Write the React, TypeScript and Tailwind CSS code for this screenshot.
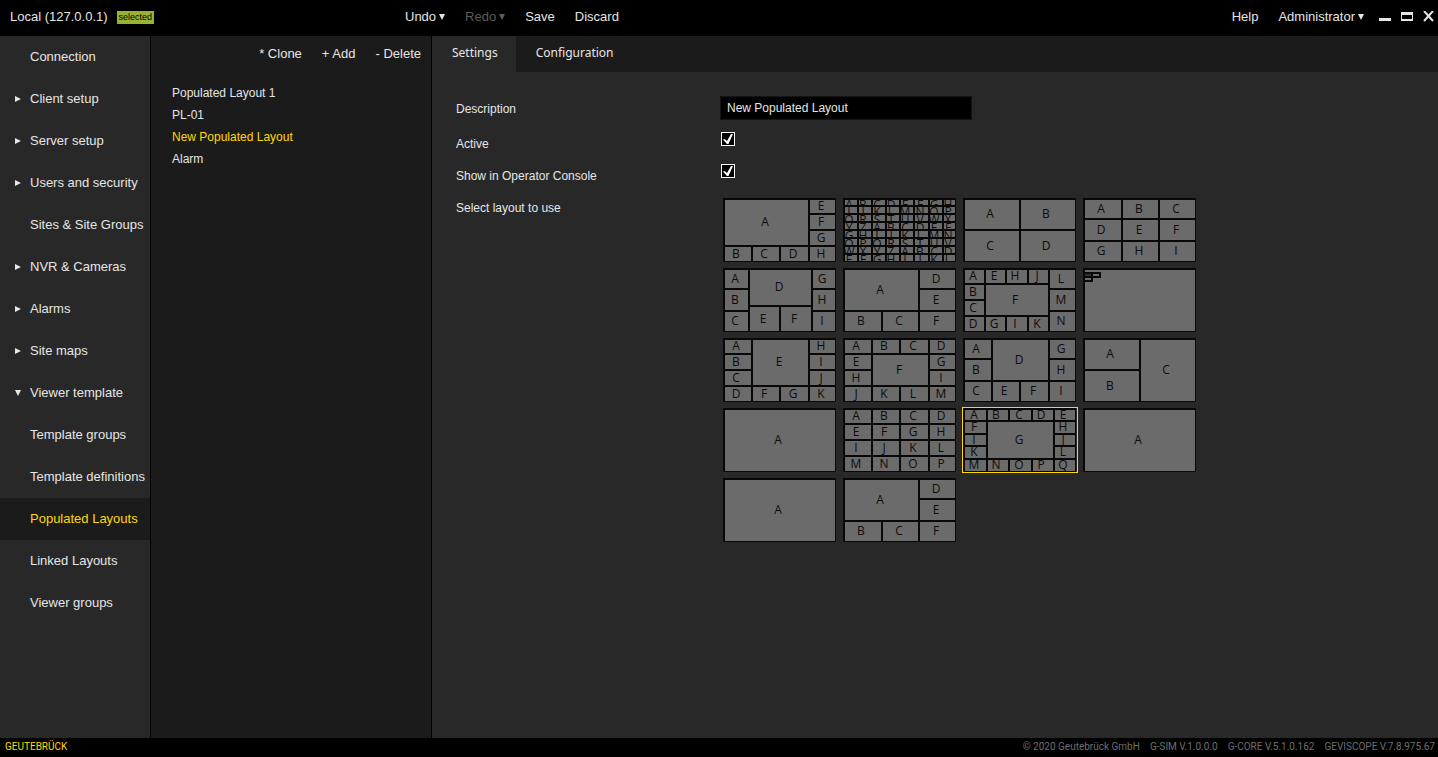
import { useState } from "react";
import type { ReactNode } from "react";

type Cell = [string, number, number, number, number];

interface Layout {
  cells: Cell[];
  fragments?: boolean;
}

const ALPHABET = "ABCDEFGHIJKLMNOPQRSTUVWXYZ";

function evenGrid(xs: number[], ys: number[]): Cell[] {
  const cells: Cell[] = [];
  for (let r = 0; r < ys.length - 1; r++) {
    for (let c = 0; c < xs.length - 1; c++) {
      cells.push([ALPHABET[cells.length % 26], xs[c], ys[r], xs[c + 1], ys[r + 1]]);
    }
  }
  return cells;
}

const W = 112;
const H = 63;

const single: Layout = { cells: [["A", 0, 0, W, H]] };

const sixPane: Layout = {
  cells: [
    ["A", 0, 0, 75, 42], ["B", 0, 42, 38, H], ["C", 38, 42, 75, H],
    ["D", 75, 0, W, 20], ["E", 75, 20, W, 42], ["F", 75, 42, W, H],
  ],
};

const layouts: Layout[] = [
  {
    cells: [
      ["A", 0, 0, 85, 47], ["B", 0, 47, 28, H], ["C", 28, 47, 56, H], ["D", 56, 47, 85, H],
      ["E", 85, 0, W, 15], ["F", 85, 15, W, 31], ["G", 85, 31, W, 47], ["H", 85, 47, W, H],
    ],
  },
  { cells: evenGrid([0, 14, 28, 42, 56, 70, 85, 99, W], [0, 7, 15, 23, 31, 39, 47, 55, H]) },
  { cells: evenGrid([0, 56, W], [0, 31, H]) },
  { cells: evenGrid([0, 38, 75, W], [0, 20, 42, H]) },
  {
    cells: [
      ["A", 0, 0, 25, 20], ["B", 0, 20, 25, 42], ["C", 0, 42, 25, H],
      ["D", 25, 0, 88, 37], ["E", 25, 37, 56, H], ["F", 56, 37, 88, H],
      ["G", 88, 0, W, 20], ["H", 88, 20, W, 42], ["I", 88, 42, W, H],
    ],
  },
  sixPane,
  {
    cells: [
      ["A", 0, 0, 21, 15], ["B", 0, 15, 21, 31], ["C", 0, 31, 21, 47], ["D", 0, 47, 21, H],
      ["E", 21, 0, 42, 15], ["F", 21, 15, 85, 47], ["G", 21, 47, 42, H],
      ["H", 42, 0, 64, 15], ["I", 42, 47, 64, H],
      ["J", 64, 0, 85, 15], ["K", 64, 47, 85, H],
      ["L", 85, 0, W, 20], ["M", 85, 20, W, 42], ["N", 85, 42, W, H],
    ],
  },
  { cells: [["", 0, 0, W, H]], fragments: true },
  {
    cells: [
      ["A", 0, 0, 28, 15], ["B", 0, 15, 28, 31], ["C", 0, 31, 28, 47], ["D", 0, 47, 28, H],
      ["E", 28, 0, 85, 47], ["F", 28, 47, 56, H], ["G", 56, 47, 85, H],
      ["H", 85, 0, W, 15], ["I", 85, 15, W, 31], ["J", 85, 31, W, 47], ["K", 85, 47, W, H],
    ],
  },
  {
    cells: [
      ["A", 0, 0, 28, 15], ["B", 28, 0, 56, 15], ["C", 56, 0, 85, 15], ["D", 85, 0, W, 15],
      ["E", 0, 15, 28, 31], ["F", 28, 15, 85, 47], ["G", 85, 15, W, 31],
      ["H", 0, 31, 28, 47], ["I", 85, 31, W, 47],
      ["J", 0, 47, 28, H], ["K", 28, 47, 56, H], ["L", 56, 47, 85, H], ["M", 85, 47, W, H],
    ],
  },
  {
    cells: [
      ["A", 0, 0, 28, 20], ["B", 0, 20, 28, 42], ["C", 0, 42, 28, H],
      ["D", 28, 0, 85, 42], ["E", 28, 42, 56, H], ["F", 56, 42, 85, H],
      ["G", 85, 0, W, 20], ["H", 85, 20, W, 42], ["I", 85, 42, W, H],
    ],
  },
  { cells: [["A", 0, 0, 56, 31], ["B", 0, 31, 56, H], ["C", 56, 0, W, H]] },
  single,
  { cells: evenGrid([0, 28, 56, 85, W], [0, 15, 31, 47, H]) },
  {
    cells: [
      ["A", 0, 0, 23, 12], ["B", 23, 0, 45, 12], ["C", 45, 0, 68, 12], ["D", 68, 0, 90, 12], ["E", 90, 0, W, 12],
      ["F", 0, 12, 23, 25], ["G", 23, 12, 90, 50], ["H", 90, 12, W, 25],
      ["I", 0, 25, 23, 37], ["J", 90, 25, W, 37],
      ["K", 0, 37, 23, 50], ["L", 90, 37, W, 50],
      ["M", 0, 50, 23, H], ["N", 23, 50, 45, H], ["O", 45, 50, 68, H], ["P", 68, 50, 90, H], ["Q", 90, 50, W, H],
    ],
  },
  single,
  single,
  sixPane,
];

function LayoutDrawing({ layout }: { layout: Layout }) {
  return (
    <svg width="113" height="64" viewBox="0 0 113 64" className="block" shapeRendering="crispEdges">
      <rect width="113" height="64" fill="#080808" />
      {layout.cells.map(([letter, x0, y0, x1, y1], i) => {
        const left = x0 + 2;
        const top = y0 + 2;
        const baseline = Math.max(Math.floor((y0 + y1) / 2) + 5, y0 + 11);
        return (
          <svg key={i} x={left} y={top} width={x1 - left} height={y1 - top} overflow="hidden">
            <rect width="100%" height="100%" fill="#6b6b6b" />
            <text
              x={Math.floor((x0 + x1 - 1) / 2) - left}
              y={baseline - top}
              textAnchor="middle"
              fill="#0c0c0c"
              className="font-['Open_Sans',sans-serif] text-[12px]"
            >
              {letter}
            </text>
          </svg>
        );
      })}
      {layout.fragments && (
        <g fill="none" stroke="#080808" strokeWidth="2">
          <path d="M2 5H9V9H2Z" fill="#333" stroke="none" />
          <path d="M1 5H17V9H1M9 5V13H1" />
        </g>
      )}
    </svg>
  );
}

interface NavItem {
  label: string;
  state?: "closed" | "open";
}

const navItems: NavItem[] = [
  { label: "Connection" },
  { label: "Client setup", state: "closed" },
  { label: "Server setup", state: "closed" },
  { label: "Users and security", state: "closed" },
  { label: "Sites & Site Groups" },
  { label: "NVR & Cameras", state: "closed" },
  { label: "Alarms", state: "closed" },
  { label: "Site maps", state: "closed" },
  { label: "Viewer template", state: "open" },
  { label: "Template groups" },
  { label: "Template definitions" },
  { label: "Populated Layouts" },
  { label: "Linked Layouts" },
  { label: "Viewer groups" },
];

function Triangle({ direction }: { direction: "right" | "down" }) {
  return (
    <svg width="6" height="6" viewBox="0 0 6 6" fill="currentColor" className="shrink-0" aria-hidden="true">
      <path d={direction === "right" ? "M0 0L6 3L0 6Z" : "M0 0H6L3 6Z"} />
    </svg>
  );
}

function MenuButton({ children, arrow, disabled }: { children: ReactNode; arrow?: boolean; disabled?: boolean }) {
  return (
    <button type="button" disabled={disabled} className="flex items-center gap-[3px] disabled:text-[#5c5c5c]">
      {children}
      {arrow && <Triangle direction="down" />}
    </button>
  );
}

function CheckBox({ id }: { id: string }) {
  return (
    <span className="relative ml-[1px] block size-[14px]">
      <input
        id={id}
        type="checkbox"
        defaultChecked
        className="peer block size-[14px] appearance-none border border-white bg-black"
      />
      <svg
        viewBox="0 0 14 14"
        className="pointer-events-none absolute inset-0 hidden size-[14px] peer-checked:block"
        aria-hidden="true"
      >
        <path d="M2 7.5L3.5 7L6 9L10 2H12L7.5 12H6Z" fill="#fff" />
      </svg>
    </span>
  );
}

export default function App() {
  const [page, setPage] = useState("Populated Layouts");
  const [entry, setEntry] = useState("New Populated Layout");
  const [tab, setTab] = useState("Settings");
  const [chosen, setChosen] = useState(14);

  return (
    <div className="flex min-h-screen flex-col bg-[#282828] font-['Liberation_Sans',Arial,sans-serif] text-[13px] leading-4 text-[#e6e6e6]">
      <header className="grid h-9 shrink-0 grid-cols-[405px_1fr_auto] items-center bg-black pb-[2px]">
        <div className="flex items-center gap-[9px] pl-[10px]">
          <span>Local (127.0.0.1)</span>
          <span className="bg-[#96b432] px-[2px] text-[9px] leading-[13px] text-black">selected</span>
        </div>
        <nav className="flex gap-5" aria-label="Edit">
          <MenuButton arrow>Undo</MenuButton>
          <MenuButton arrow disabled>Redo</MenuButton>
          <MenuButton>Save</MenuButton>
          <MenuButton>Discard</MenuButton>
        </nav>
        <div className="flex items-center gap-5 pr-1">
          <MenuButton>Help</MenuButton>
          <MenuButton arrow>Administrator</MenuButton>
          <div className="-ml-[5px] flex items-center gap-[10px]">
            <button type="button" aria-label="Minimize">
              <svg width="12" height="12" viewBox="0 0 12 12" className="block">
                <path d="M0 7H12V10H0Z" fill="#e6e6e6" />
              </svg>
            </button>
            <button type="button" aria-label="Maximize">
              <svg width="12" height="12" viewBox="0 0 12 12" className="block">
                <path d="M0 1H12V10H0ZM1 4V8H11V4Z" fill="#e6e6e6" fillRule="evenodd" />
              </svg>
            </button>
            <button type="button" aria-label="Close">
              <svg width="11" height="12" viewBox="0 0 11 12" className="block">
                <path d="M1 0L10 10M10 0L1 10" stroke="#e6e6e6" strokeWidth="2" />
              </svg>
            </button>
          </div>
        </div>
      </header>

      <div className="flex flex-1">
        <nav className="w-[151px] shrink-0 border-r border-black" aria-label="Main">
          {navItems.map(({ label, state }) => (
            <button
              key={label}
              type="button"
              onClick={() => setPage(label)}
              className={`flex h-[42px] w-full items-center whitespace-nowrap pl-[15px] text-left ${
                page === label ? "bg-[#1b1b1b] text-[#ffd800]" : ""
              }`}
            >
              <span className="w-[15px] shrink-0">
                {state && <Triangle direction={state === "open" ? "down" : "right"} />}
              </span>
              {label}
            </button>
          ))}
        </nav>

        <section className="w-[281px] shrink-0 border-r border-black bg-[#1b1b1b]">
          <div className="flex h-9 items-center justify-end gap-5 pr-[10px]">
            <button type="button">* Clone</button>
            <button type="button">+ Add</button>
            <button type="button">- Delete</button>
          </div>
          <ul className="pt-[10px] pl-[21px] text-[12px]">
            {["Populated Layout 1", "PL-01", "New Populated Layout", "Alarm"].map((name) => (
              <li key={name}>
                <button
                  type="button"
                  onClick={() => setEntry(name)}
                  className={`block h-[22px] w-full text-left ${entry === name ? "text-[#ffd800]" : ""}`}
                >
                  {name}
                </button>
              </li>
            ))}
          </ul>
        </section>

        <main className="flex-1">
          <div className="flex h-9 bg-[#1b1b1b] font-['Noto_Sans',sans-serif] text-[12px]" role="tablist">
            {["Settings", "Configuration"].map((name) => (
              <button
                key={name}
                type="button"
                role="tab"
                aria-selected={tab === name}
                onClick={() => setTab(name)}
                className={`pr-[18px] pb-[2px] pl-5 ${tab === name ? "bg-[#282828]" : ""}`}
              >
                {name}
              </button>
            ))}
          </div>

          <form className="grid grid-cols-[264px_1fr] pt-6 pl-6 text-[12px]">
            <label htmlFor="description" className="pt-[5px]">Description</label>
            <div className="h-9">
              <input
                id="description"
                type="text"
                defaultValue="New Populated Layout"
                className="block h-6 w-[252px] border border-[#141414] bg-black px-[6px] outline-none"
              />
            </div>
            <label htmlFor="active" className="pt-1">Active</label>
            <div className="h-8">
              <CheckBox id="active" />
            </div>
            <label htmlFor="operator" className="pt-1">Show in Operator Console</label>
            <div className="h-8">
              <CheckBox id="operator" />
            </div>
            <span id="layout-label" className="pt-1">Select layout to use</span>
            <div
              role="group"
              aria-labelledby="layout-label"
              className="grid grid-cols-[repeat(4,116px)] gap-1 pt-[1px] pl-[2px]"
            >
              {layouts.map((layout, i) => (
                <button
                  key={i}
                  type="button"
                  aria-label={`Layout ${i + 1}`}
                  aria-pressed={chosen === i}
                  onClick={() => setChosen(i)}
                  className={`h-[66px] border ${chosen === i ? "border-[#ffd800]" : "border-transparent"}`}
                >
                  <LayoutDrawing layout={layout} />
                </button>
              ))}
            </div>
          </form>
        </main>
      </div>

      <footer className="flex h-[19px] shrink-0 items-center justify-between bg-black pr-[3px] pb-[2px] pl-[5px] font-[Roboto,sans-serif] text-[10px]">
        <span className="text-[#ffd800]">GEUTEBRÜCK</span>
        <div className="flex gap-[10px] text-[#6e6e6e]">
          <span>© 2020 Geutebrück GmbH</span>
          <span>G-SIM V.1.0.0.0</span>
          <span>G-CORE V.5.1.0.162</span>
          <span>GEVISCOPE V.7.8.975.67</span>
        </div>
      </footer>
    </div>
  );
}
